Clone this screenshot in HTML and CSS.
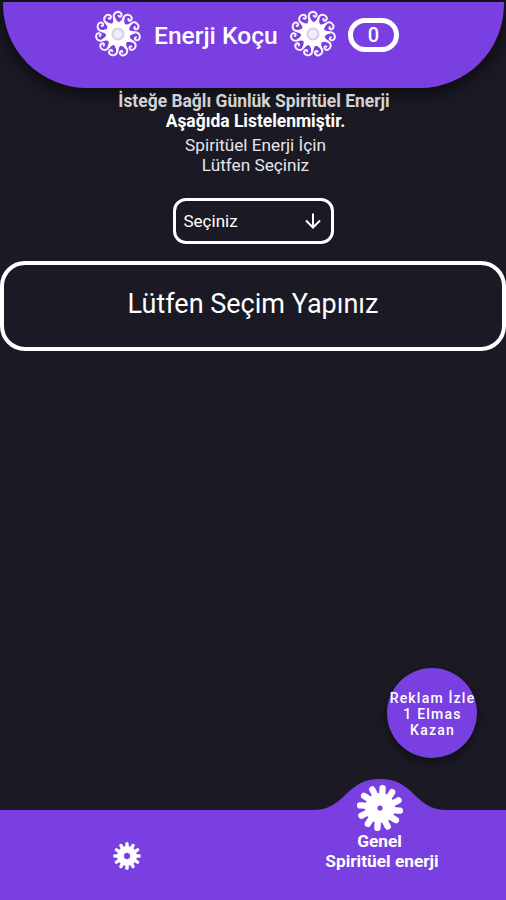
FILE: index.html
```
<!DOCTYPE html>
<html lang="tr">
<head>
<meta charset="utf-8">
<title>Enerji Koçu</title>
<link rel="stylesheet" href="styles.css">
</head>
<body>
<svg class="defs" width="0" height="0" aria-hidden="true">
  <defs>
    <path id="ray" d="M1 -11 C-2.6 -14.5 -3 -20 1 -21.6 C4.6 -22.8 7.2 -20 5.8 -17.6 C4.9 -16.2 3.2 -16.8 3.2 -18"/>
    <path id="flare" d="M-5 -10 Q-2.4 -12.5 -2.6 -17 L-0.6 -17 Q-0.2 -12.8 4.6 -9.5 Z"/>
    <symbol id="sun" viewBox="-24 -24 48 48">
      <g transform="rotate(-8)">
      <g fill="none" stroke="#f8f2ff" stroke-width="2" stroke-linecap="round">
        <use href="#ray"/><use href="#ray" transform="rotate(32.73)"/><use href="#ray" transform="rotate(65.45)"/><use href="#ray" transform="rotate(98.18)"/><use href="#ray" transform="rotate(130.91)"/><use href="#ray" transform="rotate(163.64)"/><use href="#ray" transform="rotate(196.36)"/><use href="#ray" transform="rotate(229.09)"/><use href="#ray" transform="rotate(261.82)"/><use href="#ray" transform="rotate(294.55)"/><use href="#ray" transform="rotate(327.27)"/>
      </g>
      <g fill="#fff">
        <use href="#flare"/><use href="#flare" transform="rotate(32.73)"/><use href="#flare" transform="rotate(65.45)"/><use href="#flare" transform="rotate(98.18)"/><use href="#flare" transform="rotate(130.91)"/><use href="#flare" transform="rotate(163.64)"/><use href="#flare" transform="rotate(196.36)"/><use href="#flare" transform="rotate(229.09)"/><use href="#flare" transform="rotate(261.82)"/><use href="#flare" transform="rotate(294.55)"/><use href="#flare" transform="rotate(327.27)"/>
        <circle r="12"/>
      </g>
      </g>
      <circle r="5.4" fill="#f1edfb" stroke="#d9d2ee" stroke-width="2.4"/>
    </symbol>
    <path id="petal" d="M0 -10 Q2 -15 1.2 -20"/>
    <symbol id="blossom" viewBox="-24 -24 48 48">
      <g fill="none" stroke="#fff" stroke-width="6.4" stroke-linecap="round" transform="rotate(4)">
        <use href="#petal"/><use href="#petal" transform="rotate(30)"/><use href="#petal" transform="rotate(60)"/><use href="#petal" transform="rotate(90)"/><use href="#petal" transform="rotate(120)"/><use href="#petal" transform="rotate(150)"/><use href="#petal" transform="rotate(180)"/><use href="#petal" transform="rotate(210)"/><use href="#petal" transform="rotate(240)"/><use href="#petal" transform="rotate(270)"/><use href="#petal" transform="rotate(300)"/><use href="#petal" transform="rotate(330)"/>
      </g>
      <circle r="8.8" fill="none" stroke="#fff" stroke-width="12.4"/>
    </symbol>
    <path id="tooth" d="M0 -8 V-12.2"/>
    <symbol id="gear" viewBox="-14 -14 28 28">
      <g stroke="#fff" stroke-width="3.4" stroke-linecap="round">
        <use href="#tooth"/><use href="#tooth" transform="rotate(30)"/><use href="#tooth" transform="rotate(60)"/><use href="#tooth" transform="rotate(90)"/><use href="#tooth" transform="rotate(120)"/><use href="#tooth" transform="rotate(150)"/><use href="#tooth" transform="rotate(180)"/><use href="#tooth" transform="rotate(210)"/><use href="#tooth" transform="rotate(240)"/><use href="#tooth" transform="rotate(270)"/><use href="#tooth" transform="rotate(300)"/><use href="#tooth" transform="rotate(330)"/>
      </g>
      <circle r="6.6" fill="none" stroke="#fff" stroke-width="6.8"/>
    </symbol>
  </defs>
</svg>
<div class="screen">
  <header class="header">
    <svg class="sun"><use href="#sun"/></svg>
    <h1 class="title">Enerji Koçu</h1>
    <svg class="sun"><use href="#sun"/></svg>
    <div class="counter">0</div>
  </header>
  <main class="content">
    <p class="intro"><span class="dim">İsteğe Bağlı Günlük Spiritüel Enerji</span><br><span class="intro-end">Aşağıda Listelenmiştir.</span></p>
    <p class="prompt">Spiritüel Enerji İçin<br>Lütfen Seçiniz</p>
    <div class="select">
      <span>Seçiniz</span>
      <svg width="16" height="16" viewBox="0 0 16 16" fill="none" stroke="#fff" stroke-width="2"><path d="M8 0.5V14.5M1 7.5L8 14.5L15 7.5"/></svg>
    </div>
    <div class="result">Lütfen Seçim Yapınız</div>
  </main>
  <button class="reward">Reklam İzle<br>1 Elmas<br>Kazan</button>
  <nav class="nav">
    <svg class="nav-shape" viewBox="0 0 506 121"><path d="M0 31H313C346 31 345 0 380 0C415 0 414 31 447 31H506V121H0Z" fill="#793fe0"/></svg>
    <a class="tab"><svg class="gear"><use href="#gear"/></svg></a>
    <a class="tab tab-active"><svg class="blossom"><use href="#blossom"/></svg><span>Genel</span><span class="tab-second">Spiritüel enerji</span></a>
  </nav>
</div>
</body>
</html>
```
FILE: styles.css
```
* { box-sizing: border-box; }
body { margin: 0; background: #1b1924; color: #fff; font-family: Roboto, sans-serif; }
.defs { position: absolute; }
svg { display: block; flex-shrink: 0; }
h1, p { margin: 0; }
.screen {
  position: relative;
  display: flex;
  flex-direction: column;
  height: 900px;
  padding-top: 1px;
  overflow: hidden;
  border-top: 1px solid #101014;
}
.header {
  display: flex;
  align-items: flex-start;
  height: 86px;
  margin: 0 2px 0 3px;
  padding: 8px 0 0 91px;
  background: #793fe0;
  border-radius: 0 0 84px 84px;
  box-shadow: 0 3px 16px 3px rgba(0, 0, 0, .55);
}
.sun { width: 48px; height: 48px; }
.title {
  width: 124px;
  margin: 11px 11px 0 12px;
  font-size: 24.6px;
  line-height: 30px;
  font-weight: 500;
  white-space: nowrap;
}
.counter {
  width: 51px;
  height: 34px;
  margin: 8px 0 0 11px;
  border: 5px solid #fff;
  border-radius: 17px;
  font-size: 20px;
  line-height: 25px;
  font-weight: 500;
  text-align: center;
}
.content { display: flex; flex-direction: column; align-items: center; }
.intro {
  margin-top: 4px;
  padding-left: 2px;
  font-size: 17.45px;
  line-height: 19.5px;
  font-weight: 700;
  text-align: center;
}
.dim { color: #d2d2d4; }
.intro-end { padding-left: 3px; }
.prompt {
  margin-top: 5px;
  padding-left: 5px;
  color: #e6e6e8;
  font-size: 17.2px;
  line-height: 19.5px;
  text-align: center;
}
.select {
  display: flex;
  align-items: center;
  justify-content: space-between;
  width: 161px;
  height: 46px;
  margin-top: 23px;
  padding: 0 10px 0 8px;
  border: 3px solid #fff;
  border-radius: 13px;
  font-size: 17px;
}
.result {
  width: 506px;
  height: 90px;
  margin-top: 17px;
  border: 4px solid #fff;
  border-radius: 25px;
  font-size: 27px;
  line-height: 79px;
  text-align: center;
}
.reward {
  position: absolute;
  right: 29px;
  bottom: 142px;
  width: 90px;
  height: 90px;
  padding: 2px 0 0 1px;
  border: 0;
  border-radius: 50%;
  background: #793fe0;
  box-shadow: 0 4px 10px rgba(0, 0, 0, .45);
  color: #fff;
  font: 500 14px/16px Roboto, sans-serif;
  letter-spacing: 1.2px;
  white-space: nowrap;
}
.nav {
  position: relative;
  display: grid;
  grid-template-columns: 1fr 1fr;
  height: 121px;
  margin-top: auto;
}
.nav-shape { position: absolute; inset: 0; width: 506px; height: 121px; }
.tab { position: relative; display: flex; flex-direction: column; align-items: center; }
.gear { width: 28px; height: 28px; margin-top: 63px; }
.tab-active {
  padding-top: 5px;
  font-size: 17.3px;
  line-height: 19.5px;
  font-weight: 700;
}
.tab-second { padding-left: 5px; }
.blossom { width: 48px; height: 48px; }
```
